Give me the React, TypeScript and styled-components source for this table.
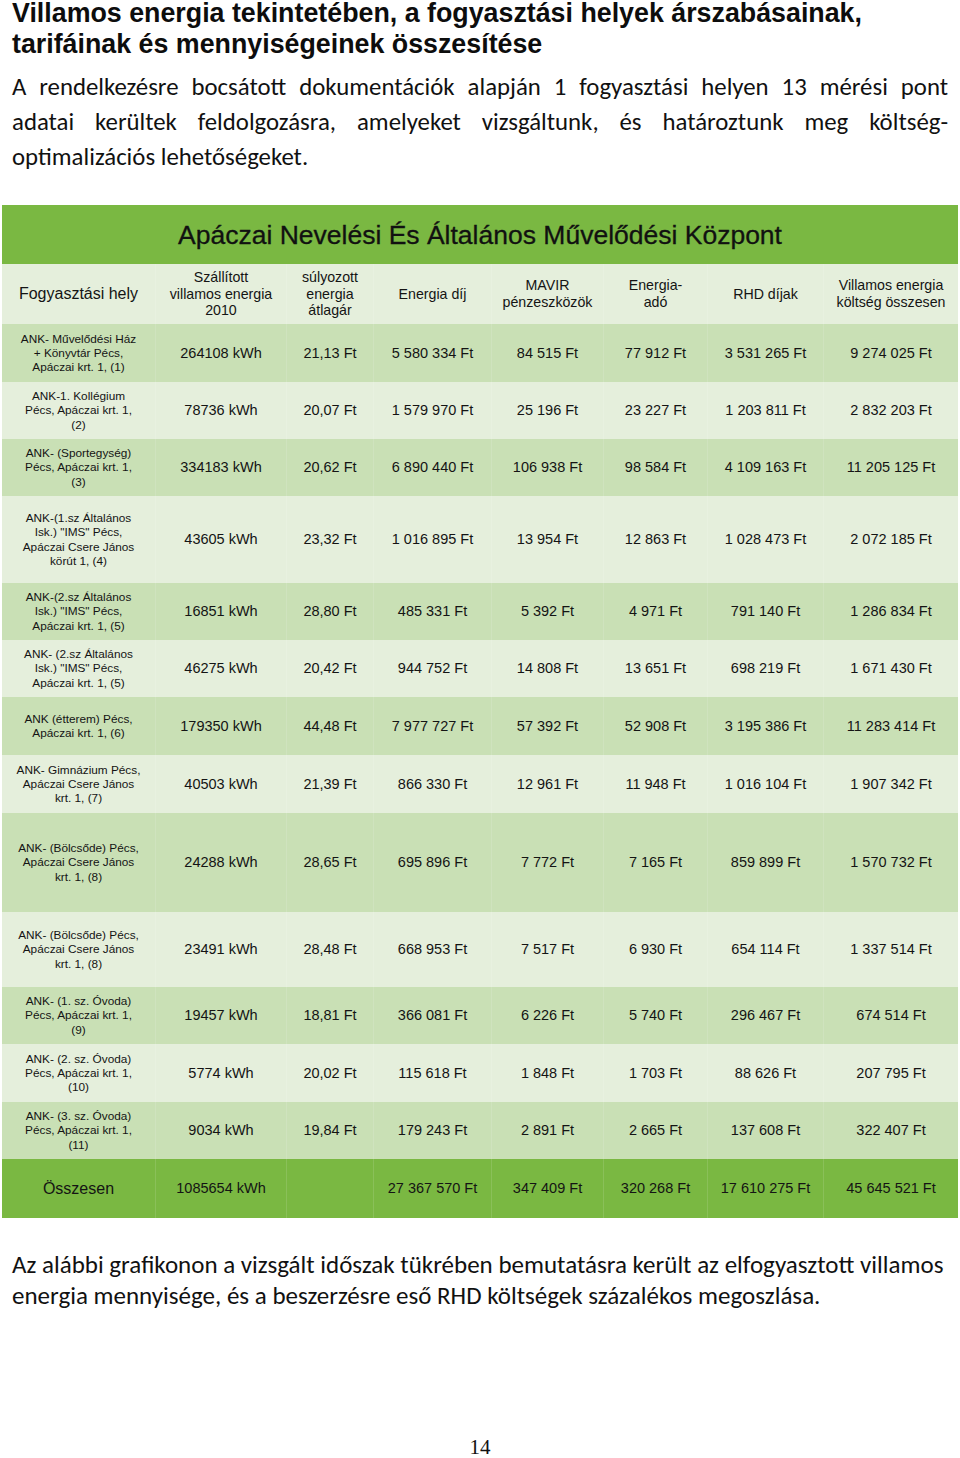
import React from "react";
import styled, { createGlobalStyle, css } from "styled-components";

const GlobalStyle = createGlobalStyle`
  html, body { margin: 0; padding: 0; background: #ffffff; }
  body { font-family: "Liberation Sans", Arial, sans-serif; color: #111; }
`;

const GREEN = "#7ab842";
const DARK = "#c9e0b5";
const LIGHT = "#e5efdc";
const COLS = "153px 131px 87px 118px 112px 104px 116px 135px";

const Page = styled.div`
  width: 960px;
  display: flex;
  flex-direction: column;
`;

const Heading = styled.h1`
  margin: -2px 0 0;
  padding: 0 12px;
  font-family: "Liberation Sans", Arial, sans-serif;
  font-weight: bold;
  font-size: 26.8px;
  line-height: 31px;
  color: #0d0d0d;
`;

const Prose = styled.div<{ $top: number; $lh: number; $size: number }>`
  margin: ${(p) => p.$top}px 12px 0;
  font-family: Calibri, Carlito, Lato, "Open Sans", sans-serif;
  font-size: ${(p) => p.$size}px;
  line-height: ${(p) => p.$lh}px;
  color: #111;
`;

const Line = styled.span<{ $justify?: boolean }>`
  display: block;
  white-space: nowrap;
  ${(p) =>
    p.$justify
      ? css`
          text-align: justify;
          text-align-last: justify;
          white-space: normal;
        `
      : css`
          text-align: left;
        `}
`;

const Table = styled.div`
  margin: 31px 2px 0;
  width: 956px;
  display: flex;
  flex-direction: column;
`;

const TitleBar = styled.div`
  height: 59px;
  background: ${GREEN};
  display: flex;
  align-items: center;
  justify-content: center;
  font-size: 26.5px;
  color: #111;
  padding-top: 1px;
  box-sizing: border-box;
  -webkit-text-stroke: 0.3px #111;
`;

const Row = styled.div<{ $h: number; $tone: "dark" | "light" | "green" }>`
  display: grid;
  grid-template-columns: ${COLS};
  height: ${(p) => p.$h}px;
  background: ${(p) =>
    p.$tone === "dark" ? DARK : p.$tone === "green" ? GREEN : LIGHT};
`;

const Cell = styled.div<{ $kind?: "place" | "head" | "num" | "big" }>`
  display: flex;
  align-items: center;
  justify-content: center;
  text-align: center;
  white-space: nowrap;
  color: #141414;
  border-left: 1px solid rgba(255, 255, 255, 0.12);
  &:first-child { border-left: none; }
  ${(p) =>
    p.$kind === "place"
      ? css`
          font-size: 11.8px;
          line-height: 14.3px;
        `
      : p.$kind === "head"
      ? css`
          font-size: 14.2px;
          line-height: 16.8px;
        `
      : p.$kind === "big"
      ? css`
          font-size: 16px;
          line-height: 18px;
        `
      : css`
          font-size: 14.5px;
          line-height: 17px;
        `}
`;

const PageNumber = styled.div`
  margin-top: 124px;
  text-align: center;
  font-family: "Liberation Serif", "Times New Roman", serif;
  font-size: 21px;
  line-height: 24px;
  color: #111;
`;

type Tone = "dark" | "light";
interface DataRow {
  h: number;
  place: string[];
  values: string[];
}

const rows: DataRow[] = [
  { h: 58, place: ["ANK- Művelődési Ház", "+ Könyvtár Pécs,", "Apáczai krt. 1, (1)"], values: ["264108 kWh", "21,13 Ft", "5 580 334 Ft", "84 515 Ft", "77 912 Ft", "3 531 265 Ft", "9 274 025 Ft"] },
  { h: 57, place: ["ANK-1. Kollégium", "Pécs, Apáczai krt. 1,", "(2)"], values: ["78736 kWh", "20,07 Ft", "1 579 970 Ft", "25 196 Ft", "23 227 Ft", "1 203 811 Ft", "2 832 203 Ft"] },
  { h: 57, place: ["ANK- (Sportegység)", "Pécs, Apáczai krt. 1,", "(3)"], values: ["334183 kWh", "20,62 Ft", "6 890 440 Ft", "106 938 Ft", "98 584 Ft", "4 109 163 Ft", "11 205 125 Ft"] },
  { h: 87, place: ["ANK-(1.sz Általános", "Isk.) \"IMS\" Pécs,", "Apáczai Csere János", "körút 1, (4)"], values: ["43605 kWh", "23,32 Ft", "1 016 895 Ft", "13 954 Ft", "12 863 Ft", "1 028 473 Ft", "2 072 185 Ft"] },
  { h: 57, place: ["ANK-(2.sz Általános", "Isk.) \"IMS\" Pécs,", "Apáczai krt. 1, (5)"], values: ["16851 kWh", "28,80 Ft", "485 331 Ft", "5 392 Ft", "4 971 Ft", "791 140 Ft", "1 286 834 Ft"] },
  { h: 57, place: ["ANK- (2.sz Általános", "Isk.) \"IMS\" Pécs,", "Apáczai krt. 1, (5)"], values: ["46275 kWh", "20,42 Ft", "944 752 Ft", "14 808 Ft", "13 651 Ft", "698 219 Ft", "1 671 430 Ft"] },
  { h: 58, place: ["ANK (étterem) Pécs,", "Apáczai krt. 1, (6)"], values: ["179350 kWh", "44,48 Ft", "7 977 727 Ft", "57 392 Ft", "52 908 Ft", "3 195 386 Ft", "11 283 414 Ft"] },
  { h: 58, place: ["ANK- Gimnázium Pécs,", "Apáczai Csere János", "krt. 1, (7)"], values: ["40503 kWh", "21,39 Ft", "866 330 Ft", "12 961 Ft", "11 948 Ft", "1 016 104 Ft", "1 907 342 Ft"] },
  { h: 99, place: ["ANK- (Bölcsőde) Pécs,", "Apáczai Csere János", "krt. 1, (8)"], values: ["24288 kWh", "28,65 Ft", "695 896 Ft", "7 772 Ft", "7 165 Ft", "859 899 Ft", "1 570 732 Ft"] },
  { h: 75, place: ["ANK- (Bölcsőde) Pécs,", "Apáczai Csere János", "krt. 1, (8)"], values: ["23491 kWh", "28,48 Ft", "668 953 Ft", "7 517 Ft", "6 930 Ft", "654 114 Ft", "1 337 514 Ft"] },
  { h: 57, place: ["ANK- (1. sz. Óvoda)", "Pécs, Apáczai krt. 1,", "(9)"], values: ["19457 kWh", "18,81 Ft", "366 081 Ft", "6 226 Ft", "5 740 Ft", "296 467 Ft", "674 514 Ft"] },
  { h: 58, place: ["ANK- (2. sz. Óvoda)", "Pécs, Apáczai krt. 1,", "(10)"], values: ["5774 kWh", "20,02 Ft", "115 618 Ft", "1 848 Ft", "1 703 Ft", "88 626 Ft", "207 795 Ft"] },
  { h: 57, place: ["ANK- (3. sz. Óvoda)", "Pécs, Apáczai krt. 1,", "(11)"], values: ["9034 kWh", "19,84 Ft", "179 243 Ft", "2 891 Ft", "2 665 Ft", "137 608 Ft", "322 407 Ft"] },
];

const headers: string[][] = [
  ["Szállított", "villamos energia", "2010"],
  ["súlyozott", "energia", "átlagár"],
  ["Energia díj"],
  ["MAVIR", "pénzeszközök"],
  ["Energia-", "adó"],
  ["RHD díjak"],
  ["Villamos energia", "költség összesen"],
];

const totals = ["1085654 kWh", "", "27 367 570 Ft", "347 409 Ft", "320 268 Ft", "17 610 275 Ft", "45 645 521 Ft"];

const Lines: React.FC<{ lines: string[] }> = ({ lines }) => (
  <span>
    {lines.map((l, i) => (
      <React.Fragment key={i}>
        {i > 0 && <br />}
        {l}
      </React.Fragment>
    ))}
  </span>
);

export default function App() {
  return (
    <>
      <GlobalStyle />
      <Page>
        <Heading>
          Villamos energia tekintetében, a fogyasztási helyek árszabásainak,
          <br />
          tarifáinak és mennyiségeinek összesítése
        </Heading>

        <Prose $top={9} $lh={35} $size={24.8}>
          <Line $justify>
            A rendelkezésre bocsátott dokumentációk alapján 1 fogyasztási helyen 13 mérési pont
          </Line>
          <Line $justify>
            adatai kerültek feldolgozásra, amelyeket vizsgáltunk, és határoztunk meg költség-
          </Line>
          <Line>optimalizációs lehetőségeket.</Line>
        </Prose>

        <Table>
          <TitleBar>Apáczai Nevelési És Általános Művelődési Központ</TitleBar>
          <Row $h={60} $tone="light">
            <Cell $kind="big">Fogyasztási hely</Cell>
            {headers.map((h, i) => (
              <Cell key={i} $kind="head">
                <Lines lines={h} />
              </Cell>
            ))}
          </Row>
          {rows.map((r, i) => {
            const tone: Tone = i % 2 === 0 ? "dark" : "light";
            return (
              <Row key={i} $h={r.h} $tone={tone}>
                <Cell $kind="place">
                  <Lines lines={r.place} />
                </Cell>
                {r.values.map((v, j) => (
                  <Cell key={j} $kind="num">
                    {v}
                  </Cell>
                ))}
              </Row>
            );
          })}
          <Row $h={59} $tone="green">
            <Cell $kind="big">Összesen</Cell>
            {totals.map((v, j) => (
              <Cell key={j} $kind="num">
                {v}
              </Cell>
            ))}
          </Row>
        </Table>

        <Prose $top={31} $lh={31} $size={25}>
          <Line>
            Az alábbi grafikonon a vizsgált időszak tükrében bemutatásra került az elfogyasztott villamos
          </Line>
          <Line>energia mennyisége, és a beszerzésre eső RHD költségek százalékos megoszlása.</Line>
        </Prose>

        <PageNumber>14</PageNumber>
      </Page>
    </>
  );
}
